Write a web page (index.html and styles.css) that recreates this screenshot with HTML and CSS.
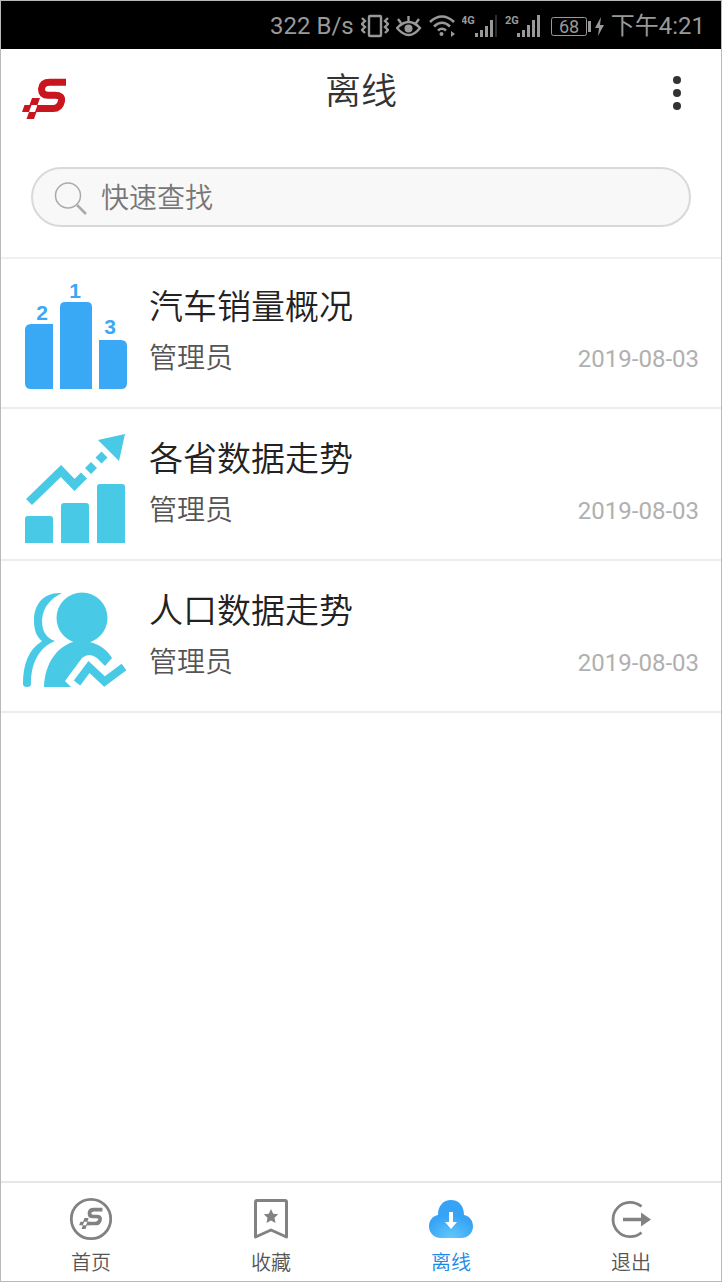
FILE: index.html
```html
<!DOCTYPE html>
<html lang="zh-CN">
<head>
<meta charset="utf-8">
<meta name="viewport" content="width=device-width, initial-scale=1">
<title>离线</title>
<link rel="stylesheet" href="styles.css">
</head>
<body>
<div class="app">
  <div class="status">
    <span>322 B/s</span>
    <svg width="28" height="24" viewBox="362 13 28 24" fill="none" stroke="currentColor" stroke-width="2.400" aria-hidden="true">
      <rect x="370" y="15" width="12" height="20" rx="1"/>
      <path d="M363 17l3 3-3 3 3 3-3 3 3 3M389 17l-3 3 3 3-3 3 3 3-3 3"/>
    </svg>
    <svg width="26" height="24" viewBox="398 13 26 24" fill="none" stroke="currentColor" stroke-width="2.400" aria-hidden="true">
      <path d="M399 27Q411 15 422 27Q411 41 399 27ZM410.500 21v-6M403 22l-3-4M418 22l3-4"/>
      <circle cx="410.500" cy="27.500" r="4" fill="currentColor" stroke="none"/>
    </svg>
    <svg width="26" height="24" viewBox="429 13 26 24" fill="none" stroke="currentColor" stroke-width="2.600" aria-hidden="true">
      <path d="M430 21Q442 10 454 21M434 25.500Q442 18 450 25.500M438 29.500Q442 26 446 29.500"/>
      <circle cx="441.500" cy="33" r="2" fill="currentColor" stroke="none"/>
      <path d="M451 30l4 3-4 3z" fill="currentColor" stroke="none"/>
    </svg>
    <svg width="36" height="28" viewBox="461 11 36 28" fill="currentColor" role="img" aria-label="4G">
      <text class="net" x="460" y="23">4G</text>
      <path d="M474 32h3v4h-3zM479 29h3v7h-3zM484 25h3v11h-3zM489 19h3v17h-3z"/>
      <path d="M494 14h2v22h-2z" opacity=".3"/>
    </svg>
    <svg width="38" height="28" viewBox="505 11 38 28" fill="currentColor" role="img" aria-label="2G">
      <text class="net" x="505" y="23">2G</text>
      <path d="M517 32h3v4h-3zM522 29h3v7h-3zM527 24h3v12h-3zM532 19h3v17h-3zM537 14h3v22h-3z"/>
    </svg>
    <svg width="54" height="24" viewBox="550 13 54 24" fill="currentColor" role="img" aria-label="68">
      <rect x="551.500" y="16.500" width="35" height="18" rx="2" fill="none" stroke="currentColor"/>
      <path d="M588 20h3v11h-3zM601 16l-6 11h4l-1 8 6-11h-4z"/>
      <text class="charge" x="569" y="32" text-anchor="middle">68</text>
    </svg>
    <span class="clock">下午4:21</span>
  </div>

  <header class="header">
    <svg width="46" height="42" viewBox="20 78 46 42" role="img" aria-label="S">
      <g id="mark">
        <path d="M65 82.300H49Q41 82.300 40.500 89Q40.500 95.300 47 95.300H54Q61.500 95.300 60.500 101Q59 108.500 52 108.500H36" fill="none" stroke="currentColor" stroke-width="7"/>
        <path d="M31 98h8l-2.500 7h-8zM23.500 105h5l2 0-2.500 7h-7zM28 112h7.500l-2.500 7h-7.500zM36.500 105h4v7h-6.500z" fill="currentColor"/>
      </g>
    </svg>
    <h1 class="title">离线</h1>
    <button class="more" type="button" aria-label="更多">
      <svg width="12" height="36" viewBox="0 0 12 36" fill="currentColor">
        <circle cx="6" cy="5" r="4"/><circle cx="6" cy="18" r="4"/><circle cx="6" cy="31" r="4"/>
      </svg>
    </button>
  </header>

  <form class="search">
    <label class="field">
      <svg width="34" height="34" viewBox="0 0 34 34" fill="none" stroke="#aaa" aria-hidden="true">
        <circle cx="15" cy="14.500" r="12.500" stroke-width="1.500"/>
        <path d="M24 24l9 9" stroke-width="2.500"/>
      </svg>
      <input class="query" type="text" placeholder="快速查找" aria-label="快速查找">
    </label>
  </form>

  <main class="list">
    <article class="item">
      <svg class="pic blue" viewBox="21 279 110 114" fill="currentColor" aria-hidden="true">
        <path d="M31 324H53V389H31Q25 389 25 383V330Q25 324 31 324Z"/>
        <path d="M65 302H87Q92 302 92 307V389H60V307Q60 302 65 302Z"/>
        <path d="M99 340H121Q127 340 127 346V383Q127 389 121 389H99Z"/>
        <g class="rank"><text x="42" y="320">2</text><text x="75" y="298">1</text><text x="110" y="334">3</text></g>
      </svg>
      <div class="info">
        <h2 class="name">汽车销量概况</h2>
        <div class="meta"><span>管理员</span><time class="date">2019-08-03</time></div>
      </div>
    </article>
    <article class="item">
      <svg class="pic cyan" viewBox="21 431 110 114" fill="currentColor" aria-hidden="true">
        <path d="M25 543V519q0-3 3-3H50q3 0 3 3V543zM61 543V506q0-3 3-3H86q3 0 3 3V543zM97 543V487q0-3 3-3H122q3 0 3 3V543z"/>
        <path d="M29 502L61 471L74.500 485L84 475.500" fill="none" stroke="currentColor" stroke-width="8.500"/>
        <path d="M91 462l6 6-6 6-6-6zM101.500 451.500l6 6-6 6-6-6zM98 440L125 434L119 461Z"/>
      </svg>
      <div class="info">
        <h2 class="name">各省数据走势</h2>
        <div class="meta"><span>管理员</span><time class="date">2019-08-03</time></div>
      </div>
    </article>
    <article class="item">
      <svg class="pic cyan" viewBox="21 583 110 114" fill="currentColor" aria-hidden="true">
        <circle cx="82" cy="618" r="25.500"/>
        <path d="M44 687C45 663 57 647 73 642H90C101 645 108 651 112 658L105 666L97 658Q89 652 82 658L65 681L71 687Z"/>
        <path d="M62 593C43 592 34 605 34 620C34 631 37 637 42 641C28 650 23 665 23 684Q23 687 27 687Q31 687 31 684C31 664 38 648 55 641C46 638 42 631 42 620C43 606 52 598 62 593Z"/>
        <path d="M77 683L89 667L104.500 681.500L124 667" fill="none" stroke="currentColor" stroke-width="8"/>
      </svg>
      <div class="info">
        <h2 class="name">人口数据走势</h2>
        <div class="meta"><span>管理员</span><time class="date">2019-08-03</time></div>
      </div>
    </article>
  </main>

  <nav class="tabs">
    <a class="tab" href="#home">
      <svg class="glyph" viewBox="67 1196 48 48" fill="none" aria-hidden="true">
        <circle cx="91" cy="1219" r="19.700" stroke="currentColor" stroke-width="2.800"/>
        <use href="#mark" transform="translate(68 1166) scale(.53)"/>
      </svg>
      <span>首页</span>
    </a>
    <a class="tab" href="#favorites">
      <svg class="glyph" viewBox="247 1196 48 48" fill="none" aria-hidden="true">
        <path d="M257 1200.500H285Q286.500 1200.500 286.500 1202V1237L271 1230L255.500 1237V1202Q255.500 1200.500 257 1200.500Z" stroke="currentColor" stroke-width="3" stroke-linejoin="round"/>
        <path d="M271 1209l2.200 4.700 5 .6-3.700 3.500 1 5.200-4.500-2.600-4.500 2.600 1-5.200-3.700-3.500 5-.6z" fill="currentColor"/>
      </svg>
      <span>收藏</span>
    </a>
    <a class="tab active" href="#offline" aria-current="page">
      <svg class="glyph" viewBox="427 1196 48 48" aria-hidden="true">
        <defs><radialGradient id="sky" cx=".5" cy="1" r=".6"><stop offset="0" stop-color="#62c8fa"/><stop offset="1" stop-color="#36a3f6"/></radialGradient></defs>
        <path d="M441 1238C433 1238 429 1232 429 1226.500C429 1220 433 1216 438 1215C438 1206 443 1200 451 1200C459 1200 464 1206 464 1215C469 1216 473 1220 473 1226.500C473 1232 469 1238 461 1238Z" fill="url(#sky)"/>
        <path d="M449 1212h4v10h4l-6 7-6-7h4z" fill="#fff"/>
      </svg>
      <span>离线</span>
    </a>
    <a class="tab" href="#exit">
      <svg class="glyph" viewBox="607 1196 48 48" fill="none" aria-hidden="true">
        <path d="M641.500 1206.500A17.200 17.200 0 1 0 641.500 1232.500" stroke="currentColor" stroke-width="2.800"/>
        <path d="M623 1219.500H642" stroke="currentColor" stroke-width="3.500"/>
        <path d="M641 1212.500l10 7-10 7z" fill="currentColor"/>
      </svg>
      <span>退出</span>
    </a>
  </nav>
</div>
</body>
</html>
```
FILE: styles.css
```css
* { box-sizing: border-box; }
body {
  margin: 0;
  font-family: Roboto, "Noto Sans CJK SC", sans-serif;
  font-weight: 350;
  color: #222;
  background: #fff;
}
svg { display: block; flex: none; }
.app {
  display: flex;
  flex-direction: column;
  min-height: 100vh;
  border: 1px solid #b9b9b9;
}
.status {
  display: flex;
  align-items: center;
  justify-content: flex-end;
  gap: 7px;
  height: 48px;
  padding: 2px 16px 0 0;
  background: #000;
  color: #999;
  font-size: 24px;
  line-height: 28px;
  font-weight: 400;
  white-space: nowrap;
}
.net { font-size: 11px; font-weight: 700; }
.charge { font-size: 18px; }
.header {
  display: grid;
  grid-template-columns: 48px 1fr 48px;
  align-items: center;
  height: 88px;
  padding: 12px 20px 0;
  color: #c9151e;
}
.title {
  margin: 0;
  padding-bottom: 14px;
  font-size: 36px;
  line-height: 40px;
  font-weight: 350;
  text-align: center;
  color: #333;
}
.more {
  display: flex;
  justify-content: flex-end;
  padding: 0 18px 12px 0;
  border: 0;
  background: none;
  color: #333;
}
.search {
  padding: 30px;
  box-shadow: 0 2px 0 #f0f0f0;
}
.field {
  display: flex;
  align-items: center;
  gap: 14px;
  height: 60px;
  padding: 2px 20px 0;
  border: 2px solid #d9d9d9;
  border-radius: 30px;
  background: #f8f8f8;
}
.query {
  flex: 1;
  min-width: 0;
  padding: 0;
  border: 0;
  outline: 0;
  background: none;
  font: inherit;
  font-size: 28px;
  color: #333;
}
.query::placeholder { color: #777; opacity: 1; }
.list { flex: 1; }
.item {
  display: flex;
  gap: 18px;
  height: 152px;
  padding: 22px 22px 0 20px;
  border-bottom: 2px solid #ececec;
}
.pic { width: 110px; height: 114px; }
.blue { color: #3aa9f5; }
.cyan { color: #48c9e6; }
.rank {
  font: 700 21px "Liberation Sans", sans-serif;
  text-anchor: middle;
}
.info { flex: 1; min-width: 0; padding-top: 4px; }
.name {
  margin: 0;
  font-size: 34px;
  line-height: 48px;
  font-weight: 350;
}
.meta {
  display: flex;
  align-items: center;
  justify-content: space-between;
  margin-top: 8px;
  font-size: 28px;
  line-height: 40px;
  color: #555;
}
.date { font-size: 24px; font-weight: 400; color: #b0b0b0; }
.tabs {
  display: grid;
  grid-template-columns: repeat(4, 1fr);
  height: 100px;
  border-top: 2px solid #e6e6e6;
}
.tab {
  display: flex;
  flex-direction: column;
  align-items: center;
  gap: 5px;
  padding-top: 13px;
  font-size: 20px;
  line-height: 28px;
  color: #555;
  text-decoration: none;
}
.glyph { width: 48px; height: 48px; color: #828282; }
.active { color: #1989e8; }
```
